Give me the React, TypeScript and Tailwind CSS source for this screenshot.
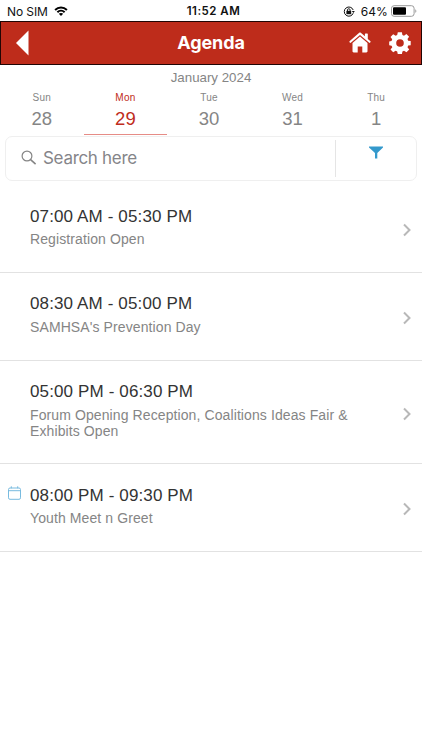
import React from 'react';

const days = [
  { name: 'Sun', num: '28' },
  { name: 'Mon', num: '29', active: true },
  { name: 'Tue', num: '30' },
  { name: 'Wed', num: '31' },
  { name: 'Thu', num: '1' },
];

const sessions = [
  { time: '07:00 AM - 05:30 PM', title: 'Registration Open', height: 'h-[88px]', top: 'pt-[21px]', gap: 'pt-[4px]' },
  { time: '08:30 AM - 05:00 PM', title: "SAMHSA's Prevention Day", height: 'h-[88px]', top: 'pt-[20px]', gap: 'pt-[5px]' },
  {
    time: '05:00 PM - 06:30 PM',
    title: 'Forum Opening Reception, Coalitions Ideas Fair & Exhibits Open',
    height: 'h-[103px]',
    top: 'pt-[20px]',
    gap: 'pt-[5px]',
  },
  { time: '08:00 PM - 09:30 PM', title: 'Youth Meet n Greet', height: 'h-[88px]', top: 'pt-[21px]', gap: 'pt-[4px]', saved: true },
];

function StatusBar() {
  return (
    <div className="grid h-[21px] grid-cols-3 items-center bg-white px-[7px] font-['Inter',sans-serif] text-[12px] leading-[21px] text-[#111]">
      <div className="flex items-center gap-[6px]">
        <span className="whitespace-nowrap pt-px tracking-[-0.1px]">No SIM</span>
        <svg width="14" height="10" viewBox="0 0 15 11" fill="none" stroke="#000" strokeWidth="2.2">
          <path d="M1 4.3C4.7.7 10.3.7 14 4.3" />
          <path d="M3.5 6.9c2.3-2.2 5.7-2.2 8 0" />
          <path d="M7.5 10.9 5.1 8.5c1.3-1.2 3.5-1.2 4.8 0Z" fill="#000" stroke="none" />
        </svg>
      </div>
      <div className="whitespace-nowrap pl-[5px] pt-px text-center text-[11.5px] font-semibold tracking-[0.5px]">11:52 AM</div>
      <div className="flex items-center justify-end">
        <svg className="mr-[6px]" width="12" height="11" viewBox="0 0 12 11" fill="none" stroke="#111">
          <path d="M10.2 7.2A4.6 4.6 0 1 1 10.2 4" />
          <path d="m8.8 5 1.7 2 1.3-2Z" fill="#111" stroke="none" />
          <rect x="3.4" y="4.8" width="4.8" height="3.4" fill="#111" stroke="none" />
          <path d="M4.5 5V4a1.3 1.3 0 0 1 2.6 0v1" strokeWidth=".9" />
        </svg>
        <span className="mr-[3px] pt-px tracking-[0.1px]">64%</span>
        <svg className="-mr-[2px]" width="26" height="12" viewBox="0 0 26 12">
          <rect x=".5" y=".7" width="22.6" height="10.6" rx="2.6" fill="none" stroke="#999" />
          <rect x="2" y="2.2" width="13" height="7.6" rx="1" fill="#000" />
          <path d="M24.3 4.2c1.4.5 1.4 3.1 0 3.6Z" fill="#999" />
        </svg>
      </div>
    </div>
  );
}

function Header() {
  return (
    <header className="grid h-[44px] grid-cols-3 items-center border border-[#210504] bg-[#be2c1b] text-white">
      <svg className="ml-[14px]" width="14" height="26" viewBox="0 0 14 26">
        <path d="M13.5.5v25L1 13Z" fill="#fff" />
      </svg>
      <h1 className="text-center font-['Inter',sans-serif] text-[18px] font-bold leading-[22px] tracking-[-0.1px]">Agenda</h1>
      <div className="flex items-center justify-end pr-[10px]">
        <svg className="-mt-px mr-[18px]" width="22" height="21" viewBox="0 0 22 21" fill="#fff">
          <path d="M10.2.8.5 9.3c-.5.5.6 2 1.3 1.5L11 2.9l9.2 7.9c.7.5 1.8-1 1.3-1.5l-2.7-2.4V2.1c0-.4-.2-.6-.6-.6h-1.7c-.4 0-.6.2-.6.6v2.1L11.8.8c-.5-.4-1.1-.4-1.6 0Z" />
          <path d="m11 4.6-7.5 6.5v8.2c0 .7.5 1.2 1.2 1.2h4v-6h4.6v6h4c.7 0 1.2-.5 1.2-1.2v-8.2Z" />
        </svg>
        <svg className="-mt-px" width="22" height="22" viewBox="0 0 22 22" fill="#fff" fillRule="evenodd">
          <path d="m8.8.3-.6 2.8-1.6.7L4.2 2.2 1.5 4.9l1.7 2.4-.7 1.6-2.3.5v3.8l2.4.5.7 1.6-1.8 2.3 2.7 2.7 2.4-1.5 1.6.7.6 2.7h4.1l.5-2.7 1.6-.7 2.5 1.5 2.7-2.7-1.7-2.4.7-1.6 2.5-.4V9.1l-2.5-.4-.7-1.6 1.6-2.4-2.7-2.7L15 3.7l-1.6-.7-.5-2.7ZM11 7.2a3.8 3.8 0 1 1 0 7.6 3.8 3.8 0 0 1 0-7.6Z" />
        </svg>
      </div>
    </header>
  );
}

function DateStrip() {
  return (
    <section className="h-[70px] text-[#858585]">
      <div className="h-[26px] pt-[4px] text-center text-[13.3px] leading-[17px]">January 2024</div>
      <div className="flex h-[44px]">
        {days.map((day) => (
          <div
            key={day.name}
            className={
              day.active
                ? 'w-[83.6px] border-b border-[#e68c86] text-center text-[#c02c20]'
                : 'w-[83.6px] border-b border-transparent text-center'
            }
          >
            <div className="h-[15px] pt-[1px] text-[10px] leading-[12px] tracking-[0.2px]">{day.name}</div>
            <div className="pt-[2px] text-[18.5px] leading-[21px]">{day.num}</div>
          </div>
        ))}
      </div>
    </section>
  );
}

function SearchBar() {
  return (
    <div className="mx-[5px] mt-px flex h-[45px] items-center rounded-[7px] border border-[#efefef] bg-white">
      <svg className="-mt-px ml-[15px]" width="16" height="16" viewBox="0 0 16 16" fill="none" stroke="#858585" strokeWidth="1.2">
        <circle cx="6" cy="6" r="4.9" />
        <path d="m9.6 9.6 5 4.6" strokeWidth="1.6" />
      </svg>
      <span className="-mt-[2px] ml-[6px] flex-1 font-['Inter',sans-serif] text-[17px] leading-[22px] tracking-[-0.3px] text-[#858589]">Search here</span>
      <div className="flex h-[37px] w-[81px] justify-center border-l border-[#e5e5e5] pt-[6px]">
        <svg width="14" height="13" viewBox="0 0 14 13">
          <path d="M0 .5h14v1L8.3 7v5.5H6V7L0 1.5Z" fill="#3499cc" />
        </svg>
      </div>
    </div>
  );
}

export default function App() {
  return (
    <main className="h-[750px] w-[422px] overflow-hidden bg-white font-['Liberation_Sans',Arial,sans-serif]">
      <StatusBar />
      <Header />
      <DateStrip />
      <SearchBar />
      <ul className="mt-[4px]">
        {sessions.map((session) => (
          <li key={session.time} className={`${session.height} flex border-b border-[#e2e2e2]`}>
            <div className="w-[30px] pl-[8px] pt-[22px]">
              {session.saved && (
                <svg width="13" height="14" viewBox="0 0 13 14" fill="none" stroke="#78bbdf">
                  <rect x=".5" y="2" width="12" height="11.3" rx="1.5" />
                  <path d="M.5 4.7h12M3.3.3v2M9.7.3v2" />
                </svg>
              )}
            </div>
            <div className={`${session.top} w-[335px]`}>
              <div className="text-[17px] leading-[21px] tracking-[0.13px] text-[#333]">{session.time}</div>
              <div className={`${session.gap} text-[14px] leading-[16px] tracking-[0.1px] text-[#858585]`}>{session.title}</div>
            </div>
            <div className="ml-auto flex items-center pr-[10px] pt-[3px]">
              <svg width="10" height="14" viewBox="0 0 10 14" fill="none" stroke="#b8b8b8" strokeWidth="2">
                <path d="m2 1.5 5.5 5.5L2 12.5" />
              </svg>
            </div>
          </li>
        ))}
      </ul>
    </main>
  );
}
